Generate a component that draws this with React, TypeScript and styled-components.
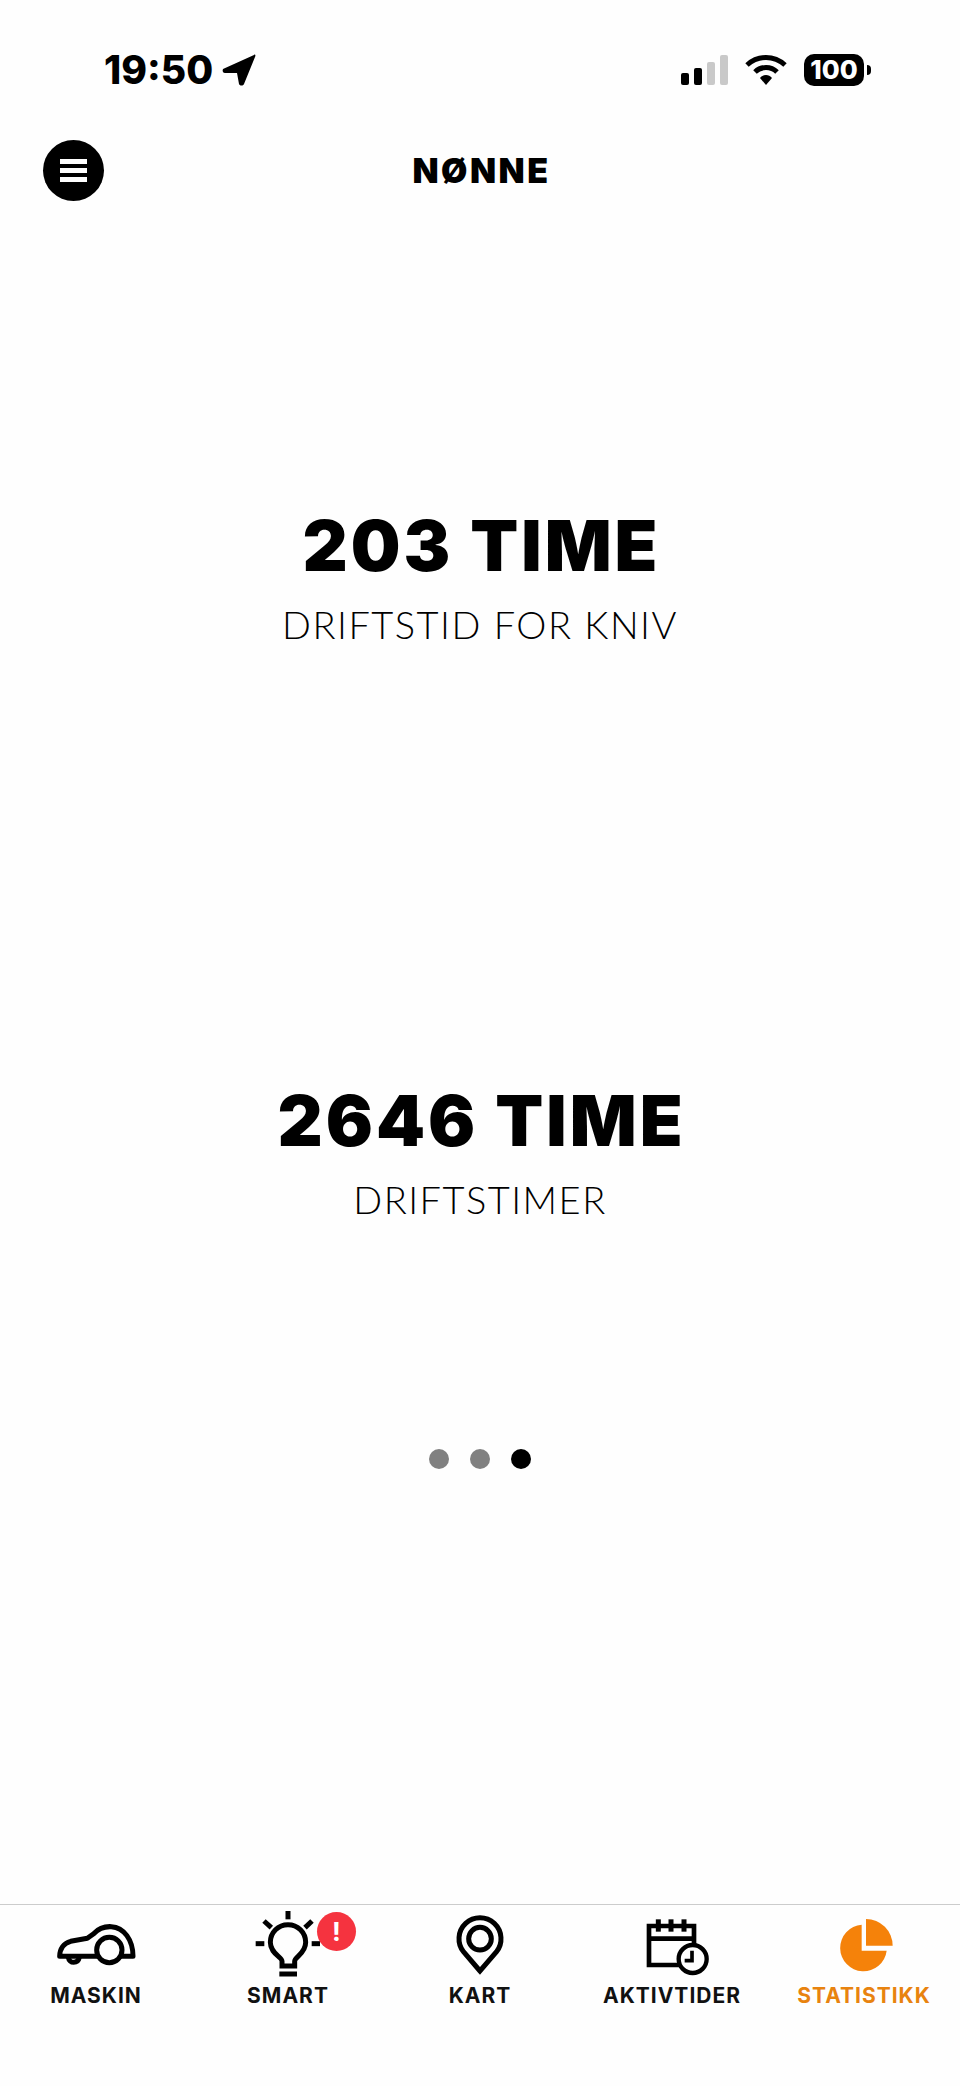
import styled, {createGlobalStyle} from 'styled-components';

const GlobalStyle = createGlobalStyle`
  html, body {
    margin: 0;
    padding: 0;
    background: #fefefe;
  }
`;

const tabs = [
    {label: 'MASKIN', viewBox: '108 60 360 210'},
    {label: 'SMART', viewBox: '24 60 360 210'},
    {label: 'KART', viewBox: '0 60 360 210'},
    {label: 'AKTIVTIDER', viewBox: '66 60 360 210'},
    {label: 'STATISTIKK', viewBox: '72 60 360 210'},
];

const MowerIcon = () => <g fill="none" stroke="#000" strokeWidth="15" strokeLinejoin="round">
    <path d="M179 199 C179 178 190 160 212 154 L262 145 L281 131 C296 115 316 109 334 110 C372 112 399 150 399 199 Z"/>
    <path d="M205 202 C208 222 234 222 238 202"/>
    <circle cx="328" cy="180" r="38" fill="#fefefe"/>
</g>;

const BulbIcon = () => <g fill="none" stroke="#000">
    <g strokeWidth="15">
        <path d="M204 63 V88"/>
        <path d="M132 93 L154 113"/>
        <path d="M276 93 L255 113"/>
        <path d="M107 161 H133"/>
        <path d="M275 161 H300"/>
    </g>
    <path strokeWidth="15" d="M186 228 V214 C186 200 151 192 151 157 A53 53 0 1 1 257 157 C257 192 224 200 224 214 V228 H186 Z"/>
    <path strokeWidth="15" d="M178 252 H231"/>
</g>;

const PinIcon = () => <g fill="none" stroke="#000" strokeWidth="15">
    <path d="M180 243 L131 186 A63 63 0 1 1 229 186 Z"/>
    <circle cx="180" cy="146" r="34"/>
</g>;

const CalendarIcon = () => <g fill="none" stroke="#000" strokeWidth="14">
    <path d="M177 108 H312 V225 H177 Z"/>
    <path d="M177 146 H312"/>
    <g strokeWidth="15">
        <path d="M205 88 V125"/>
        <path d="M243 88 V125"/>
        <path d="M282 88 V125"/>
    </g>
    <circle cx="308" cy="207" r="42" fill="#fefefe" strokeWidth="13"/>
    <path d="M306 182 V212 H284" strokeWidth="11"/>
</g>;

const PieIcon = () => <g fill="#f5820a">
    <path d="M245 104 V182 H320 A70 70 0 1 1 245 104 Z"/>
    <path d="M258 87 A80 80 0 0 1 338 167 H258 Z"/>
</g>;

const tabIcons = [<MowerIcon key="m"/>, <BulbIcon key="b"/>, <PinIcon key="p"/>, <CalendarIcon key="c"/>, <PieIcon key="s"/>];

const App = () => {
    return <Page>
        <GlobalStyle/>

        <StatusBar>
            <Clock>
                19:50
                <svg width="36" height="34" viewBox="0 0 36 34">
                    <path d="M33 2 L2 16 C1 18 2 20 4 20 L16 20 L18 31 C19 33 22 33 23 31 L34 4 C35 2 34 1 33 2 Z" fill="#000"/>
                </svg>
            </Clock>
            <StatusIcons>
                <svg width="47" height="32" viewBox="0 0 47 32">
                    <rect x="0" y="19" width="8" height="12" rx="2" fill="#000"/>
                    <rect x="13" y="14" width="8" height="17" rx="2" fill="#000"/>
                    <rect x="26" y="8" width="8" height="23" rx="2" fill="#c9c9c9"/>
                    <rect x="39" y="1" width="8" height="30" rx="2" fill="#c9c9c9"/>
                </svg>
                <svg width="42" height="32" viewBox="0 0 42 32">
                    <path d="M2 11 C13 1 29 1 40 11" fill="none" stroke="#000" strokeWidth="5"/>
                    <path d="M10 18 C16 12 26 12 32 18" fill="none" stroke="#000" strokeWidth="5"/>
                    <path d="M15 24 C18 20 24 20 27 24 L21 31 Z" fill="#000"/>
                </svg>
                <Battery>100<BatteryNub/></Battery>
            </StatusIcons>
        </StatusBar>

        <Header>
            <MenuButton>
                <MenuLine/>
                <MenuLine/>
                <MenuLine/>
            </MenuButton>
            <Logo>NØNNE</Logo>
        </Header>

        <Stats>
            <Stat>
                <StatValue>203 TIME</StatValue>
                <StatLabel>DRIFTSTID FOR KNIV</StatLabel>
            </Stat>
            <Stat>
                <StatValue>2646 TIME</StatValue>
                <StatLabel>DRIFTSTIMER</StatLabel>
            </Stat>
        </Stats>

        <Dots>
            <Dot/>
            <Dot/>
            <Dot $active/>
        </Dots>

        <TabBar>
            {tabs.map((tab, index) => <Tab key={tab.label} $active={index === 4}>
                <svg width="120" height="70" viewBox={tab.viewBox}>{tabIcons[index]}</svg>
                {index === 1 && <Badge>!</Badge>}
                <TabLabel>{tab.label}</TabLabel>
            </Tab>)}
        </TabBar>
    </Page>;
};

export default App;


const Page = styled.div`
  display: flex;
  flex-direction: column;
  height: 2086px;
  background: #fefefe;
  color: #000;
  overflow: hidden;
`;

const StatusBar = styled.div`
  display: flex;
  justify-content: space-between;
  align-items: center;
  height: 140px;
  padding: 0 96px 0 104px;
`;

const Clock = styled.div`
  display: flex;
  align-items: center;
  gap: 8px;
  font-family: Inter, "Liberation Sans", sans-serif;
  font-weight: 800;
  font-size: 39px;
  line-height: 40px;
`;

const StatusIcons = styled.div`
  display: flex;
  align-items: center;
  gap: 17px;
`;

const Battery = styled.div`
  position: relative;
  width: 60px;
  height: 32px;
  border-radius: 10px;
  background: #000;
  color: #fff;
  font-family: Inter, "Liberation Sans", sans-serif;
  font-weight: 800;
  font-size: 26px;
  line-height: 32px;
  text-align: center;
`;

const BatteryNub = styled.span`
  position: absolute;
  right: -7px;
  top: 11px;
  width: 4px;
  height: 10px;
  border-radius: 0 4px 4px 0;
  background: #000;
`;

const Header = styled.div`
  position: relative;
  display: flex;
  align-items: center;
  justify-content: center;
  height: 61px;
`;

const MenuButton = styled.div`
  position: absolute;
  left: 43px;
  top: 0;
  display: flex;
  flex-direction: column;
  justify-content: center;
  align-items: center;
  gap: 4px;
  width: 61px;
  height: 61px;
  border-radius: 50%;
  background: #000;
`;

const MenuLine = styled.span`
  width: 27px;
  height: 5px;
  background: #fff;
`;

const Logo = styled.div`
  font-family: Inter, "Liberation Sans", sans-serif;
  font-weight: 900;
  font-size: 34px;
  line-height: 61px;
  letter-spacing: 2.5px;
  padding-left: 3px;
`;

const Stats = styled.div`
  display: flex;
  flex-direction: column;
  align-items: center;
  gap: 434px;
  padding-top: 305px;
`;

const Stat = styled.div`
  display: flex;
  flex-direction: column;
  align-items: center;
  gap: 15px;
`;

const StatValue = styled.div`
  font-family: Inter, "Liberation Sans", sans-serif;
  font-weight: 900;
  font-size: 70px;
  line-height: 80px;
  letter-spacing: 3px;
  padding-left: 3px;
  white-space: nowrap;
`;

const StatLabel = styled.div`
  font-family: Lato, "Liberation Sans", sans-serif;
  font-weight: 300;
  font-size: 38px;
  line-height: 46px;
  letter-spacing: 1.5px;
  white-space: nowrap;
`;

const Dots = styled.div`
  display: flex;
  justify-content: center;
  gap: 21px;
  margin-top: 227px;
`;

const Dot = styled.span<{$active?: boolean}>`
  width: 20px;
  height: 20px;
  border-radius: 50%;
  background: ${props => props.$active ? '#000' : '#808080'};
`;

const TabBar = styled.div`
  display: grid;
  grid-template-columns: repeat(5, 192px);
  margin-top: auto;
  height: 181px;
  border-top: 1px solid #ccc;
`;

const Tab = styled.div<{$active?: boolean}>`
  position: relative;
  display: flex;
  flex-direction: column;
  align-items: center;
  padding-top: 5px;
  color: ${props => props.$active ? '#e8830f' : '#111'};
`;

const Badge = styled.span`
  position: absolute;
  left: 125px;
  top: 7px;
  width: 39px;
  height: 39px;
  border-radius: 50%;
  background: #f5333f;
  color: #fff;
  font-family: Inter, "Liberation Sans", sans-serif;
  font-weight: 700;
  font-size: 26px;
  line-height: 39px;
  text-align: center;
`;

const TabLabel = styled.div`
  margin-top: 3px;
  font-family: Inter, "Liberation Sans", sans-serif;
  font-weight: 700;
  font-size: 21px;
  line-height: 26px;
  letter-spacing: 1px;
  white-space: nowrap;
`;
